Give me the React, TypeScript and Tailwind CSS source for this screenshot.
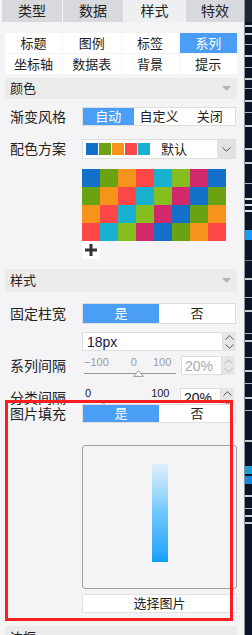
import React from "react";

const PALETTE = ["#1270c8", "#6ba213", "#f6931a", "#fe4848", "#18b2d0", "#86be1f", "#d02a6c"];

const STRIP: [number, number, string][] = [
  [0, 22, "#1b2838"],
  [25, 2, "#c9ced6"],
  [33, 2, "#c9ced6"],
  [44, 1, "#aab2bd"],
  [55, 2, "#c9ced6"],
  [67, 1, "#aab2bd"],
  [78, 2, "#c9ced6"],
  [88, 1, "#aab2bd"],
  [100, 2, "#c9ced6"],
  [112, 1, "#aab2bd"],
  [125, 2, "#c9ced6"],
  [148, 2, "#c9ced6"],
  [162, 2, "#c9ced6"],
  [183, 1, "#aab2bd"],
  [198, 2, "#dfe3e8"],
  [204, 2, "#dfe3e8"],
  [210, 2, "#dfe3e8"],
  [230, 10, "#1a9af0"],
  [260, 1, "#6d7680"],
  [278, 2, "#c9ced6"],
  [297, 1, "#aab2bd"],
  [310, 2, "#c9ced6"],
  [333, 1, "#aab2bd"],
  [340, 2, "#c9ced6"],
  [357, 1, "#aab2bd"],
  [370, 2, "#c9ced6"],
  [383, 1, "#aab2bd"],
  [397, 2, "#c9ced6"],
  [410, 1, "#aab2bd"],
  [440, 2, "#c9ced6"],
  [466, 8, "#1aa0d8"],
  [476, 8, "#1588e0"],
  [495, 2, "#c9ced6"],
  [508, 1, "#aab2bd"],
  [515, 2, "#c9ced6"],
  [522, 2, "#c9ced6"],
];

function Tri() {
  return (
    <svg width="9" height="5" viewBox="0 0 9 5">
      <path d="M0 0H9L4.5 5Z" fill="#b4b4b4" />
    </svg>
  );
}

function Chev({ up, color }: { up?: boolean; color: string }) {
  return (
    <svg width="9" height="5" viewBox="0 0 9 5">
      <path
        d={up ? "M0.5 4.5L4.5 0.8L8.5 4.5" : "M0.5 0.5L4.5 4.2L8.5 0.5"}
        fill="none"
        stroke={color}
        strokeWidth="1"
      />
    </svg>
  );
}

function Spinner({ color }: { color: string }) {
  return (
    <div className="w-[13px] h-full bg-[#e6e6e6] flex flex-col items-center justify-center gap-[4px]">
      <Chev up color={color} />
      <Chev color={color} />
    </div>
  );
}

function Header({ title, h }: { title: string; h: string }) {
  return (
    <div className={`shrink-0 flex items-center justify-between w-[232px] ml-[5px] bg-[#ebebeb] pl-[5px] pr-[6px] text-[13px] text-[#222] ${h}`}>
      <span>{title}</span>
      <Tri />
    </div>
  );
}

function Label({ text }: { text: string }) {
  return <div className="w-[82px] pl-[10px] text-[14px] text-[#222] leading-none">{text}</div>;
}

function Seg({ items, active }: { items: string[]; active: number }) {
  return (
    <div className="flex w-[154px] h-full border border-[#dedede] bg-white">
      {items.map((t, i) => (
        <div
          key={t}
          className={`flex-1 flex items-center justify-center text-[13px] leading-none ${
            i === active ? "bg-[#4a9ef5] text-white" : "text-[#222]"
          }`}
        >
          {t}
        </div>
      ))}
    </div>
  );
}

function Thumb({ stroke, fill }: { stroke: string; fill: string }) {
  return (
    <svg width="11" height="7" viewBox="0 0 11 7">
      <path d="M5.5 0.7L10.3 6.4H0.7Z" fill={fill} stroke={stroke} strokeWidth="1" />
    </svg>
  );
}

export default function App() {
  let y = 0;
  const strip = STRIP.map(([top, h, c], i) => {
    const gap = top - y;
    y = top + h;
    return (
      <div key={i} className="shrink-0" style={{ marginTop: gap, height: h, background: c }} />
    );
  });

  return (
    <div className="flex w-[252px] h-[635px] overflow-hidden font-['Liberation_Sans','Noto_Sans_CJK_SC',sans-serif]">
      <div className="relative w-[244px] h-full bg-[#f4f4f6] flex flex-col">
        {/* top tabs */}
        <div className="shrink-0 flex h-[22px] pl-[2px] gap-[1px]">
          {[
            ["类型", "w-[60px] bg-[#d8d9dc]"],
            ["数据", "w-[60px] bg-[#d8d9dc]"],
            ["样式", "w-[61px] bg-[#eeeff1]"],
            ["特效", "w-[58px] bg-[#d8d9dc]"],
          ].map(([t, c]) => (
            <div key={t} className={`flex items-center justify-center text-[14px] text-[#222] ${c}`}>
              {t}
            </div>
          ))}
        </div>

        {/* sub tabs */}
        <div className="shrink-0 mt-[11px] ml-[5px] w-[232px] grid grid-cols-4 gap-[1px]">
          {["标题", "图例", "标签", "系列", "坐标轴", "数据表", "背景", "提示"].map((t) => (
            <div
              key={t}
              className={`h-[20px] flex items-center justify-center text-[13px] leading-none ${
                t === "系列" ? "bg-[#4a9ef5] text-white" : "bg-white text-[#222]"
              }`}
            >
              {t}
            </div>
          ))}
        </div>

        <div className="mt-[4px]" />
        <Header title="颜色" h="h-[21px]" />

        <div className="shrink-0 mt-[8px] h-[19px] flex items-center">
          <Label text="渐变风格" />
          <Seg items={["自动", "自定义", "关闭"]} active={0} />
        </div>

        <div className="shrink-0 mt-[13px] h-[20px] flex items-center">
          <Label text="配色方案" />
          <div className="flex items-center w-[154px] h-full border border-[#dedede] bg-white">
            <div className="flex gap-[1px] ml-[3px]">
              {PALETTE.slice(0, 5).map((c) => (
                <div key={c} className="w-[12px] h-[12px]" style={{ background: c }} />
              ))}
            </div>
            <span className="ml-[11px] text-[13px] text-[#222] leading-none">默认</span>
            <div className="ml-auto w-[18px] h-full bg-[#e2e2e2] flex items-center justify-center">
              <Chev color="#555" />
            </div>
          </div>
        </div>

        <div className="shrink-0 mt-[10px] ml-[82px] w-[144px] grid grid-cols-8">
          {Array.from({ length: 32 }).map((_, i) => {
            const r = Math.floor(i / 8);
            const c = i % 8;
            return <div key={i} className="h-[18px]" style={{ background: PALETTE[(r + c) % 7] }} />;
          })}
        </div>
        <div className="shrink-0 ml-[82px] w-[18px] h-[18px] bg-white flex items-center justify-center">
          <svg width="12" height="12" viewBox="0 0 12 12">
            <path d="M6 0V12M0 6H12" stroke="#333" strokeWidth="3" />
          </svg>
        </div>

        <div className="mt-[10px]" />
        <Header title="样式" h="h-[23px]" />

        <div className="shrink-0 mt-[11px] h-[21px] flex items-center">
          <Label text="固定柱宽" />
          <Seg items={["是", "否"]} active={0} />
        </div>

        <div className="shrink-0 mt-[8px] h-[19px] ml-[82px] flex">
          <div className="w-[141px] h-full border border-[#dedede] bg-white flex items-center pl-[4px] text-[14px] text-[#1a1a48] leading-none">
            18px
          </div>
          <Spinner color="#555" />
        </div>

        <div className="shrink-0 mt-[5px] h-[19px] flex items-center">
          <Label text="系列间隔" />
          <div className="w-[92px] ml-[2px] flex flex-col self-start mt-[1px]">
            <div className="flex h-[12px] text-[11px] leading-none text-[#9a9a9a]">
              <span>−100</span>
              <span className="ml-[22px]">0</span>
              <span className="ml-[16px]">100</span>
            </div>
            <div className="relative h-[7px] mt-[1px] flex items-center">
              <div className="w-full h-[1px] bg-[#9a9a9a]" />
              <div className="absolute left-[49px] top-0">
                <Thumb stroke="#9a9a9a" fill="#ffffff" />
              </div>
            </div>
          </div>
          <div className="ml-[5px] flex h-full">
            <div className="w-[41px] h-full border border-[#dedede] bg-white flex items-center pl-[3px] text-[14px] text-[#aaaaaa] leading-none">
              20%
            </div>
            <Spinner color="#b5b5b5" />
          </div>
        </div>

        <div className="shrink-0 mt-[13px] h-[19px] flex items-center">
          <Label text="分类间隔" />
          <div className="w-[92px] ml-[3px] flex flex-col self-start">
            <div className="flex h-[12px] text-[11px] leading-none text-[#222]">
              <span>0</span>
              <span className="ml-[60px]">100</span>
            </div>
            <div className="relative h-[7px] mt-[1px] flex items-center">
              <div className="w-full h-[2px] bg-[#333]" />
              <div className="absolute left-[13px] top-[1px]">
                <Thumb stroke="#9a9a9a" fill="#cfcfcf" />
              </div>
            </div>
          </div>
          <div className="ml-[3px] flex h-full">
            <div className="w-[41px] h-full border border-[#dedede] bg-white flex items-center pl-[3px] text-[14px] text-[#111] leading-none">
              20%
            </div>
            <Spinner color="#555" />
          </div>
        </div>

        <div className="shrink-0 mt-[-3px] h-[19px] flex items-center relative">
          <Label text="图片填充" />
          <Seg items={["是", "否"]} active={0} />
        </div>

        <div className="shrink-0 mt-[22px] ml-[82px] w-[155px] h-[144px] border border-[#a0a0a0] rounded-[3px] flex justify-center">
          <div className="mt-[18px] w-[16px] h-[98px] bg-gradient-to-b from-[#e0f0fa] via-[#6cc6fb] to-[#06a0fc]" />
        </div>

        <div className="shrink-0 mt-[5px] ml-[82px] w-[155px] h-[19px] bg-white border border-[#e2e2e2] flex items-center justify-center text-[13px] text-[#222] leading-none">
          选择图片
        </div>

        <div className="mt-[13px]" />
        <Header title="边框" h="h-[23px]" />

        {/* red annotation box */}
        <div className="absolute left-[5px] top-[400px] w-[228px] h-[221px] border-[3px] border-[#fa1e1e] pointer-events-none" />
      </div>

      <div className="w-[8px] h-full border-l border-[#8a929c] bg-[#0a1628] flex flex-col">{strip}</div>
    </div>
  );
}
